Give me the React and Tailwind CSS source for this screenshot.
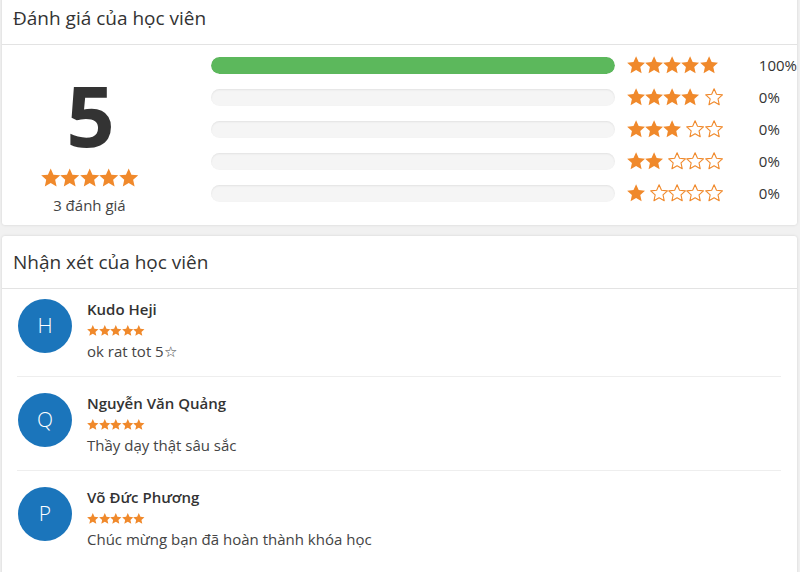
import React from 'react';

const STAR = '12,0.6 15.29,8.07 23.41,8.89 17.33,14.33 19.05,22.31 12,18.2 4.95,22.31 6.67,14.33 0.59,8.89 8.71,8.07';

function Star({ filled = true, className = '' }) {
  return filled ? (
    <svg viewBox="0.4 0.4 23.2 22.2" className={className}>
      <polygon points={STAR} fill="#f0892b" />
    </svg>
  ) : (
    <svg viewBox="-0.4 -0.4 24.8 23.6" className={className}>
      <polygon points={STAR} fill="none" stroke="#f0892b" strokeWidth="1.5" strokeLinejoin="round" />
    </svg>
  );
}

const rows = [
  { stars: 5, percent: 100 },
  { stars: 4, percent: 0 },
  { stars: 3, percent: 0 },
  { stars: 2, percent: 0 },
  { stars: 1, percent: 0 },
];

const reviews = [
  { letter: 'H', name: 'Kudo Heji', comment: 'ok rat tot 5☆' },
  { letter: 'Q', name: 'Nguyễn Văn Quảng', comment: 'Thầy dạy thật sâu sắc' },
  { letter: 'P', name: 'Võ Đức Phương', comment: 'Chúc mừng bạn đã hoàn thành khóa học' },
];

function CardHeader({ children }) {
  return (
    <div className="px-[11px] py-[14px] border-b border-[#e3e3e3]">
      <h2 className="text-[19px] leading-[24px] text-[#333]">{children}</h2>
    </div>
  );
}

export default function App() {
  return (
    <div
      className="min-h-screen bg-[#f1f1f1] pl-[2px] pr-[3px] overflow-hidden"
      style={{ fontFamily: '"Open Sans", "Noto Sans", sans-serif' }}
    >
      {/* Rating summary */}
      <div className="-mt-2 bg-white rounded-[3px] shadow-[0_0_3px_rgba(0,0,0,0.13)]">
        <CardHeader>Đánh giá của học viên</CardHeader>
        <div className="flex items-start">
          <div className="w-[178px] flex flex-col items-center pt-[27px] pb-[10px]">
            <div className="text-[85px] leading-none font-bold text-[#333] tracking-[-2px]">5</div>
            <div className="flex mt-[11px]">
              {[0, 1, 2, 3, 4].map((i) => (
                <Star key={i} className="w-[19.4px] h-[19px]" />
              ))}
            </div>
            <div className="mt-[8px] text-[15px] leading-[20px] text-[#444]">3 đánh giá</div>
          </div>

          <div className="ml-[34px] pt-[4px] flex flex-col">
            {rows.map((row) => (
              <div key={row.stars} className="h-[32px] flex items-center">
                <div className="w-[404px] h-[17px] rounded-full bg-[#f5f5f5] shadow-[inset_0_1px_2px_rgba(0,0,0,0.08)] overflow-hidden">
                  <div className="h-full rounded-full bg-[#5cb85c]" style={{ width: `${row.percent}%` }} />
                </div>
                <div className="ml-[12px] w-[132px] flex items-center">
                  {Array.from({ length: row.stars }).map((_, i) => (
                    <Star key={'f' + i} className="w-[18.2px] h-[17.5px]" />
                  ))}
                  {row.stars < 5 && (
                    <div className="ml-[5px] flex">
                      {Array.from({ length: 5 - row.stars }).map((_, i) => (
                        <Star key={'e' + i} filled={false} className="w-[18.2px] h-[17.5px]" />
                      ))}
                    </div>
                  )}
                </div>
                <div className="text-[15px] text-[#333]">{row.percent}%</div>
              </div>
            ))}
          </div>
        </div>
      </div>

      {/* Reviews */}
      <div className="mt-[11px] bg-white rounded-[3px] shadow-[0_0_3px_rgba(0,0,0,0.13)] pb-6">
        <CardHeader>Nhận xét của học viên</CardHeader>
        <div className="ml-[15px] mr-[16px]">
          {reviews.map((r, idx) => (
            <div
              key={r.name}
              className={`flex items-start pb-[15px] border-b border-[#eeeeee] last:border-b-0 ${idx === 0 ? 'pt-[10px]' : 'pt-[16px]'}`}
            >
              <div className="ml-[1px] w-[54px] h-[54px] rounded-full bg-[#1b75bb] flex items-center justify-center shrink-0">
                <span className="text-white text-[21px] font-light">{r.letter}</span>
              </div>
              <div className="ml-[15px]">
                <div className="text-[15px] leading-[20px] font-semibold text-[#333]">{r.name}</div>
                <div className="flex mt-[6px]">
                  {[0, 1, 2, 3, 4].map((i) => (
                    <Star key={i} className="w-[11.6px] h-[11px]" />
                  ))}
                </div>
                <div className="mt-[5px] text-[15px] leading-[20px] text-[#444]">{r.comment}</div>
              </div>
            </div>
          ))}
        </div>
      </div>
    </div>
  );
}
